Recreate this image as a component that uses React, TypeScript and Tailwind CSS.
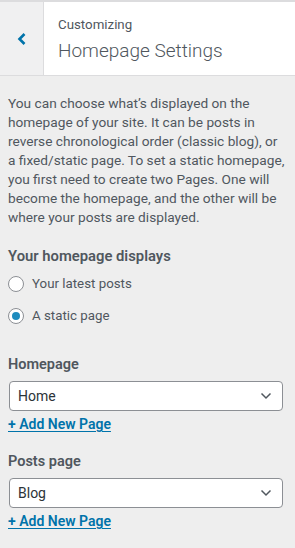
import React, { useState } from "react";

const font = { fontFamily: "Roboto, 'Noto Sans', sans-serif" };

function Radio({ checked, label, onClick }: { checked: boolean; label: string; onClick: () => void }) {
    return (
        <label className="flex items-center h-[32px] cursor-pointer" onClick={onClick}>
            <span className="flex items-center justify-center w-[16px] h-[16px] rounded-full border border-[#8c8f94] bg-white">
                {checked && <span className="w-[8px] h-[8px] rounded-full bg-[#1e8cbe]" />}
            </span>
            <span className="ml-[8px] text-[13.3px] text-[#50575e]">{label}</span>
        </label>
    );
}

function PageSelect({ label, value }: { label: string; value: string }) {
    return (
        <div className="flex flex-col">
            <div className="text-[14.5px] font-semibold text-[#50575e] leading-[20px]">{label}</div>
            <div className="mt-[6px] mr-[4px] ml-[1px] h-[30px] flex items-center justify-between rounded-[4px] border border-[#8c8f94] bg-white pl-[8px] pr-[10px]">
                <span className="text-[14px] text-[#2c3338]">{value}</span>
                <svg width="12" height="8" viewBox="0 0 12 8">
                    <path d="M1.5 1.5 L6 6 L10.5 1.5" fill="none" stroke="#50575e" strokeWidth="1.5" />
                </svg>
            </div>
            <a href="#" className="mt-[3px] text-[14px] font-semibold text-[#0073aa] underline underline-offset-2 leading-[20px] self-start">
                + Add New Page
            </a>
        </div>
    );
}

export default function App() {
    const [mode, setMode] = useState("static");

    return (
        <div className="w-[295px] h-[548px] bg-[#eeeeee] flex flex-col" style={font}>
            <div className="flex h-[76px] border-t-2 border-b border-[#dcdcde]">
                <button className="w-[44px] flex items-center justify-center bg-[#f0f0f1] border-r border-[#dcdcde]">
                    <svg width="12" height="14" viewBox="0 0 12 14">
                        <path d="M8.5 2 L3.5 7 L8.5 12" fill="none" stroke="#0073aa" strokeWidth="2.6" />
                    </svg>
                </button>
                <div className="flex-1 bg-white pl-[14px] pt-[14px]">
                    <div className="text-[13.3px] text-[#50575e] leading-[18px]">Customizing</div>
                    <div className="text-[19px] font-light text-[#50575e] leading-[28px] mt-[3px]">Homepage Settings</div>
                </div>
            </div>

            <div className="px-[8px] pt-[18px]">
                <p className="text-[13.7px] leading-[19px] text-[#50575e]">
                    You can choose what’s displayed on the homepage of your site. It can be posts in reverse chronological order (classic blog), or a fixed/static page. To set a static homepage, you first need to create two Pages. One will become the homepage, and the other will be where your posts are displayed.
                </p>

                <div className="mt-[19px] text-[14.8px] font-semibold text-[#50575e] leading-[20px]">Your homepage displays</div>
                <div className="flex flex-col mt-[2px]">
                    <Radio checked={mode === "posts"} label="Your latest posts" onClick={() => setMode("posts")} />
                    <Radio checked={mode === "static"} label="A static page" onClick={() => setMode("static")} />
                </div>

                <div className="mt-[23px] flex flex-col gap-[18px]">
                    <PageSelect label="Homepage" value="Home" />
                    <PageSelect label="Posts page" value="Blog" />
                </div>
            </div>
        </div>
    );
}
